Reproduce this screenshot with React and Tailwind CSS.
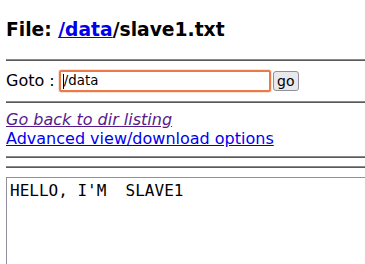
export default function App() {
  const hr = "h-[2px] border-t border-t-[#8a8a8a] border-b border-b-[#5a5a5a] -mr-2";
  return (
    <div
      className="w-[365px] h-[264px] overflow-hidden bg-white text-black pl-[6px]"
      style={{ fontFamily: '"DejaVu Sans", sans-serif' }}
    >
      <h3 className="pt-[19px] text-[18.72px] font-bold leading-[22px]">
        File:{" "}
        <a href="#" className="text-[#0000ee] underline">
          /data
        </a>
        /slave1.txt
      </h3>
      <div className={`mt-[18px] ${hr}`} />
      <div className="mt-[8px] flex items-center h-[24px] text-[16px]">
        <span>Goto :&nbsp;</span>
        <div className="-ml-[2px] w-[214px] h-[24px] rounded-[3px] border border-[#fde3d6] p-0">
          <div className="h-full rounded-[2px] border-2 border-[#ec7a48] flex items-center pl-[2px] text-[13.33px]">
            <span className="inline-block w-[1px] h-[15px] bg-black" />
            <span>/data</span>
          </div>
        </div>
        <button className="ml-[1px] h-[20px] w-[26px] rounded-[3px] border border-[#8f8f9d] bg-[#e9e9ed] text-[14px] leading-none">
          go
        </button>
      </div>
      <div className={`mt-[8px] ${hr}`} />
      <div className="mt-[8px] text-[16px] leading-[18.5px]">
        <a href="#" className="italic text-[#551a8b] underline">
          Go back to dir listing
        </a>
        <br />
        <a href="#" className="text-[#0000ee] underline">
          Advanced view/download options
        </a>
      </div>
      <div className={`mt-[8px] ${hr}`} />
      <div className={`mt-[8px] ${hr}`} />
      <div
        className="mt-[9px] w-[400px] h-[120px] border border-[#8f8f9d] px-[3px] pt-[3px] text-[16px] leading-[19px] whitespace-pre"
        style={{ fontFamily: '"DejaVu Sans Mono", monospace' }}
      >
        HELLO, I'M  SLAVE1
      </div>
    </div>
  );
}
